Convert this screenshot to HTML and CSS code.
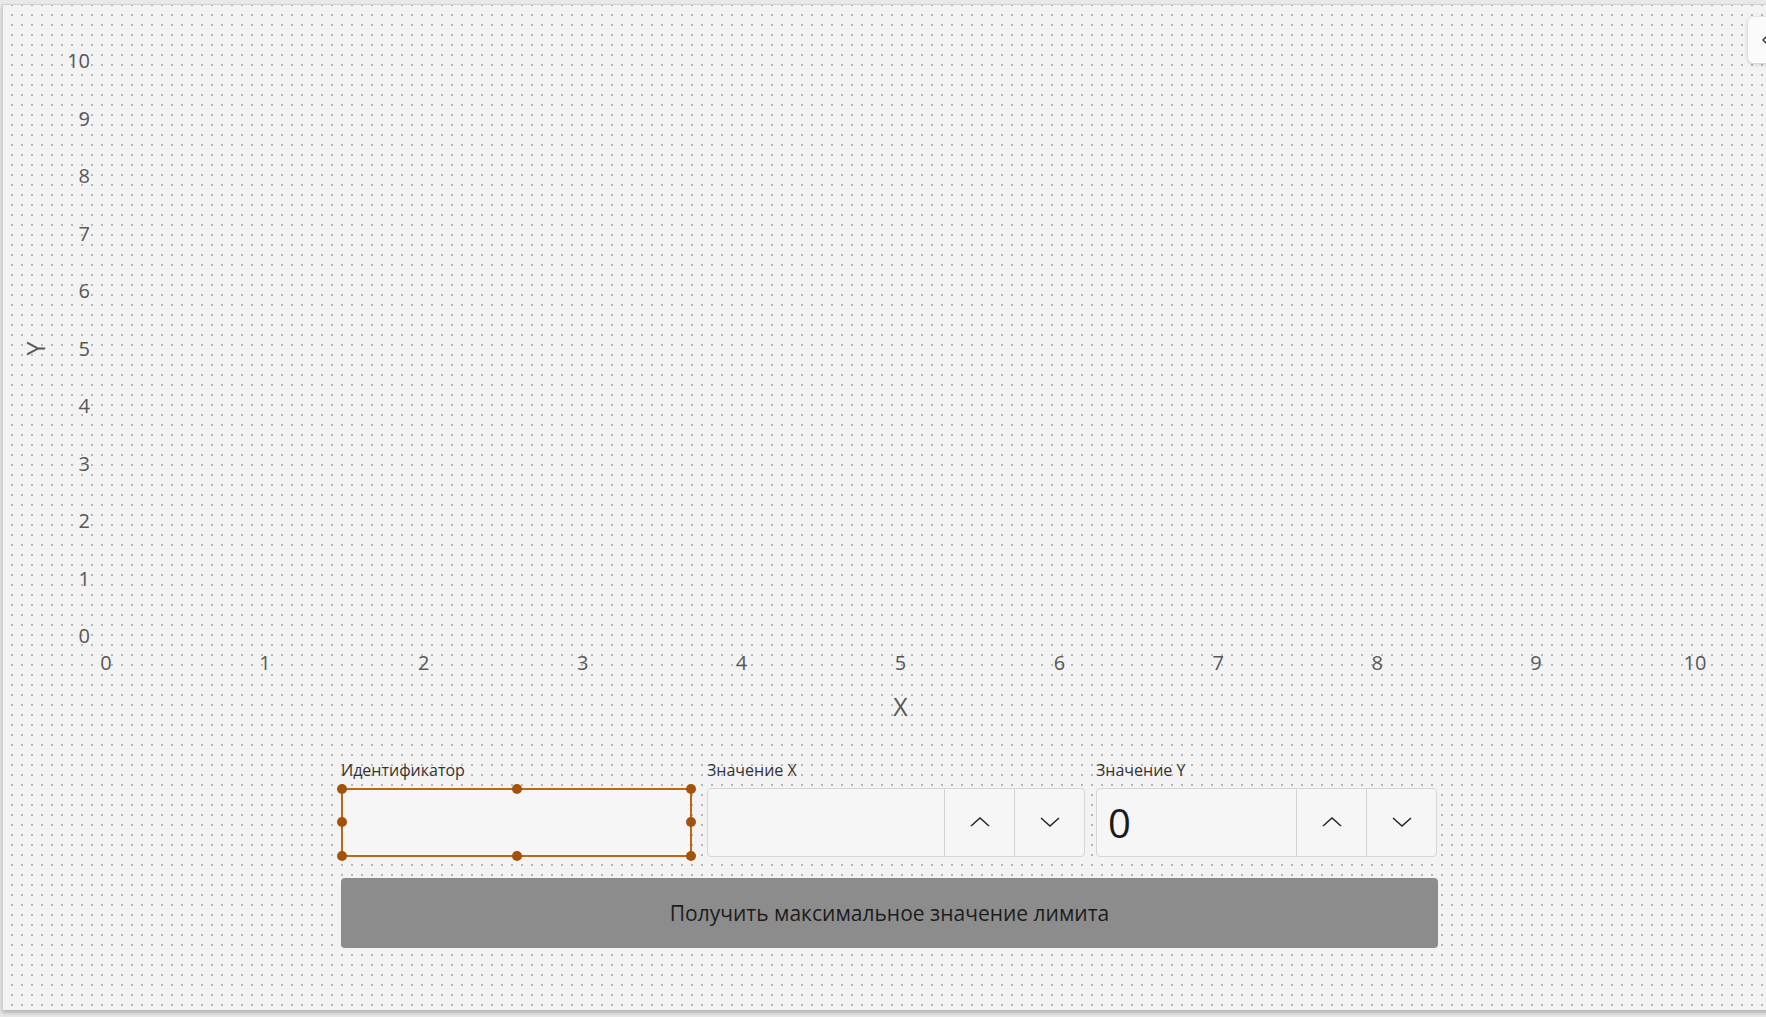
FILE: index.html
```html
<!DOCTYPE html>
<html lang="ru">
<head>
    <meta charset="UTF-8">
    <meta name="viewport" content="width=device-width, initial-scale=1.0">
    <title>Максимальное значение лимита</title>
    <link rel="stylesheet" href="styles.css">
</head>
<body>
    <div class="canvas">
        <!-- Боковая вкладка панели -->
        <div class="side-tab">
            <svg width="12" height="16" viewBox="0 0 12 16"><polyline points="8,3 3,8 8,13" fill="none" stroke="#333" stroke-width="1.4"/></svg>
        </div>

        <!-- График -->
        <div class="chart">
            <div class="y-title"><span>Y</span></div>
            <div class="y-ticks">
                <span>10</span><span>9</span><span>8</span><span>7</span><span>6</span><span>5</span>
                <span>4</span><span>3</span><span>2</span><span>1</span><span>0</span>
            </div>
            <div class="plot"></div>
            <div class="x-ticks">
                <span>0</span><span>1</span><span>2</span><span>3</span><span>4</span><span>5</span>
                <span>6</span><span>7</span><span>8</span><span>9</span><span>10</span>
            </div>
            <div class="x-title">X</div>
        </div>

        <!-- Форма запроса -->
        <div class="limit-form">
            <div class="fields">
                <div class="field field-id">
                    <label for="ident">Идентификатор</label>
                    <div class="text-box selected">
                        <input type="text" id="ident">
                        <span class="handle h-tl"></span>
                        <span class="handle h-tm"></span>
                        <span class="handle h-tr"></span>
                        <span class="handle h-ml"></span>
                        <span class="handle h-mr"></span>
                        <span class="handle h-bl"></span>
                        <span class="handle h-bm"></span>
                        <span class="handle h-br"></span>
                    </div>
                </div>

                <div class="field field-x">
                    <label for="valx">Значение X</label>
                    <div class="number-box">
                        <input type="text" id="valx">
                        <button class="spin"><svg width="20" height="12" viewBox="0 0 20 12"><polyline points="1,10 10,2 19,10" fill="none" stroke="#1f1f1f" stroke-width="1.4"/></svg></button>
                        <button class="spin"><svg width="20" height="12" viewBox="0 0 20 12"><polyline points="1,2 10,10 19,2" fill="none" stroke="#1f1f1f" stroke-width="1.4"/></svg></button>
                    </div>
                </div>

                <div class="field field-y">
                    <label for="valy">Значение Y</label>
                    <div class="number-box">
                        <input type="text" id="valy" value="0">
                        <button class="spin"><svg width="20" height="12" viewBox="0 0 20 12"><polyline points="1,10 10,2 19,10" fill="none" stroke="#1f1f1f" stroke-width="1.4"/></svg></button>
                        <button class="spin"><svg width="20" height="12" viewBox="0 0 20 12"><polyline points="1,2 10,10 19,2" fill="none" stroke="#1f1f1f" stroke-width="1.4"/></svg></button>
                    </div>
                </div>
            </div>

            <button class="submit-button">Получить максимальное значение лимита</button>
        </div>
    </div>
</body>
</html>
```

FILE: styles.css
```css
body {
    margin: 0;
    height: 100vh;
    overflow: hidden;
    background-color: #e8e8e8;
    font-family: 'Open Sans', 'Noto Sans', sans-serif;
}

.canvas {
    position: relative;
    box-sizing: border-box;
    width: 1800px;
    height: 1006px;
    margin: 4px 0 0 2px;
    border-top: 1px solid #d2d2d2;
    border-left: 1px solid #cfcfcf;
    background-color: #f3f3f3;
    background-image: radial-gradient(circle at center, #b6b6b6 0, #b6b6b6 0.9px, transparent 1.4px);
    background-size: 10px 10px;
    background-position: 4px 5px;
    box-shadow: 0 3px 4px rgba(0, 0, 0, 0.22);
}

.side-tab {
    position: absolute;
    top: 12px;
    left: 1745px;
    width: 40px;
    height: 46px;
    display: flex;
    align-items: center;
    padding-left: 12px;
    box-sizing: border-box;
    background-color: #fbfbfb;
    border-radius: 6px;
    box-shadow: 0 1px 4px rgba(0, 0, 0, 0.2);
}

/* График */
.chart {
    display: grid;
    grid-template-columns: 66px 21px 16px 1589px;
    grid-template-rows: 575.5px auto auto;
    padding-top: 56px;
    color: #575757;
}

.y-title {
    grid-column: 1;
    grid-row: 1;
    display: flex;
    align-items: center;
    justify-content: center;
    font-size: 25px;
}

.y-title span {
    display: block;
    transform: rotate(-90deg);
    line-height: 25px;
}

.y-ticks {
    grid-column: 2;
    grid-row: 1;
    display: flex;
    flex-direction: column;
    justify-content: space-between;
    font-size: 20px;
}

.y-ticks span {
    height: 0;
    display: flex;
    align-items: center;
    justify-content: flex-end;
    line-height: 24px;
}

.plot {
    grid-column: 4;
    grid-row: 1;
}

.x-ticks {
    grid-column: 4;
    grid-row: 2;
    display: flex;
    justify-content: space-between;
    margin-top: 14px;
    font-size: 20px;
    line-height: 24px;
}

.x-ticks span {
    width: 0;
    display: flex;
    justify-content: center;
    white-space: nowrap;
}

.x-title {
    grid-column: 4;
    grid-row: 3;
    margin-top: 16px;
    text-align: center;
    font-size: 25px;
    line-height: 30px;
}

/* Форма */
.limit-form {
    width: 1097px;
    margin: 39px 0 0 338px;
}

.fields {
    display: flex;
}

.field label {
    display: block;
    font-size: 16px;
    line-height: 21px;
    margin-bottom: 7px;
    color: #333333;
}

.field-id {
    width: 351px;
    margin-right: 15px;
}

.field-x {
    width: 378px;
    margin-right: 11px;
}

.field-y {
    width: 341px;
}

.field input {
    flex: 1;
    min-width: 0;
    border: none;
    outline: none;
    background: transparent;
    font-family: inherit;
    font-size: 40px;
    color: #1b1b1b;
    padding: 0 0 0 11px;
}

.text-box {
    position: relative;
    display: flex;
    box-sizing: border-box;
    height: 69px;
    background-color: #f6f6f6;
}

.text-box.selected {
    border: 2px solid #bd6712;
}

.handle {
    position: absolute;
    width: 10px;
    height: 10px;
    margin: -5px 0 0 -5px;
    border-radius: 50%;
    background-color: #a3520b;
}

.h-tl, .h-tm, .h-tr { top: -1px; }
.h-ml, .h-mr { top: 50%; }
.h-bl, .h-bm, .h-br { top: calc(100% + 1px); }
.h-tl, .h-ml, .h-bl { left: -1px; }
.h-tm, .h-bm { left: 50%; }
.h-tr, .h-mr, .h-br { left: calc(100% + 1px); }

.number-box {
    display: flex;
    box-sizing: border-box;
    height: 69px;
    background-color: #f6f6f6;
    border: 1px solid #d6d6d6;
    border-radius: 4px;
}

.spin {
    width: 70px;
    flex: none;
    display: flex;
    align-items: center;
    justify-content: center;
    padding: 0;
    border: none;
    border-left: 1px solid #d3d3d3;
    background: transparent;
}

.submit-button {
    display: block;
    width: 100%;
    height: 70px;
    margin-top: 21px;
    border: none;
    border-radius: 4px;
    background-color: #8c8c8c;
    color: #1c1c1c;
    font-family: inherit;
    font-size: 21px;
}
```
